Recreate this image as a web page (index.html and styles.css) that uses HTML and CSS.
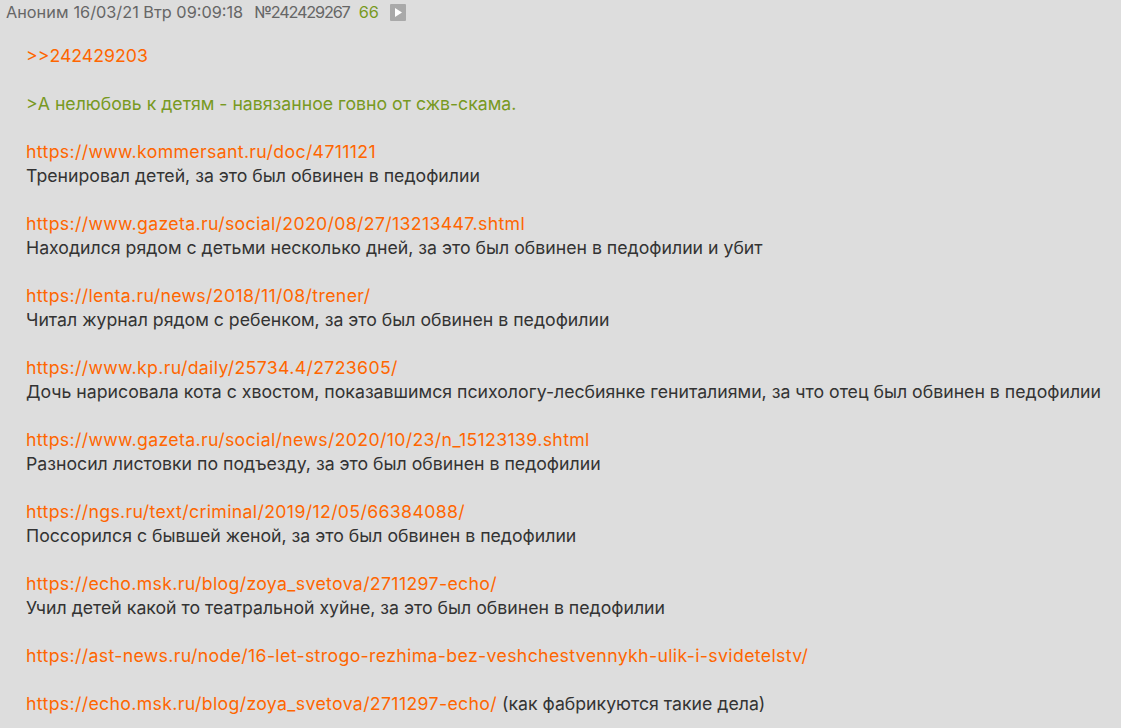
FILE: index.html
```html
<!DOCTYPE html>
<html lang="ru">
<head>
<meta charset="utf-8">
<link rel="stylesheet" href="styles.css">
</head>
<body>
<div class="post">
  <div class="post-details">
    <span class="post-name">Аноним</span>
    <span class="post-time">16/03/21 Втр 09:09:18</span>
    <span class="post-num">№242429267</span>
    <span class="post-count">66</span>
    <span class="post-play"><svg width="16" height="17" viewBox="0 0 16 17"><rect width="16" height="17" rx="1" fill="#a9a9a9"/><path d="M5 4 L12 8.5 L5 13 Z" fill="#ffffff"/></svg></span>
  </div>
  <article class="post-message">
    <a class="reply" href="#">&gt;&gt;242429203</a><br>
    <br>
    <span class="quote">&gt;А нелюбовь к детям - навязанное говно от сжв-скама.</span><br>
    <br>
    <a href="#">https://www.kommersant.ru/doc/4711121</a><br>
    Тренировал детей, за это был обвинен в педофилии<br>
    <br>
    <a href="#">https://www.gazeta.ru/social/2020/08/27/13213447.shtml</a><br>
    Находился рядом с детьми несколько дней, за это был обвинен в педофилии и убит<br>
    <br>
    <a href="#">https://lenta.ru/news/2018/11/08/trener/</a><br>
    Читал журнал рядом с ребенком, за это был обвинен в педофилии<br>
    <br>
    <a href="#">https://www.kp.ru/daily/25734.4/2723605/</a><br>
    Дочь нарисовала кота с хвостом, показавшимся психологу-лесбиянке гениталиями, за что отец был обвинен в педофилии<br>
    <br>
    <a href="#">https://www.gazeta.ru/social/news/2020/10/23/n_15123139.shtml</a><br>
    Разносил листовки по подъезду, за это был обвинен в педофилии<br>
    <br>
    <a href="#">https://ngs.ru/text/criminal/2019/12/05/66384088/</a><br>
    Поссорился с бывшей женой, за это был обвинен в педофилии<br>
    <br>
    <a href="#">https://echo.msk.ru/blog/zoya_svetova/2711297-echo/</a><br>
    Учил детей какой то театральной хуйне, за это был обвинен в педофилии<br>
    <br>
    <a href="#">https://ast-news.ru/node/16-let-strogo-rezhima-bez-veshchestvennykh-ulik-i-svidetelstv/</a><br>
    <br>
    <a href="#">https://echo.msk.ru/blog/zoya_svetova/2711297-echo/</a> (как фабрикуются такие дела)
  </article>
</div>
</body>
</html>
```
FILE: styles.css
```css
html, body {
  margin: 0;
  padding: 0;
  background: #dddddd;
}
body {
  font-family: "Inter", "DejaVu Sans", sans-serif;
  color: #333333;
  overflow: hidden;
}
.post-details {
  display: flex;
  align-items: center;
  height: 24px;
  padding: 0 6px;
  font-size: 16.3px;
  color: #666666;
  white-space: nowrap;
}
.post-time { margin-left: 5px; }
.post-num { margin-left: 11px; letter-spacing: -1.2px; }
.post-count { margin-left: 9px; color: #789922; }
.post-play { margin-left: 11px; display: flex; }
.post-message {
  display: block;
  margin-top: 20px;
  padding-left: 26px;
  font-size: 17.7px;
  line-height: 24px;
  white-space: nowrap;
}
.post-message a {
  color: #ff6600;
  text-decoration: none;
  letter-spacing: 0.35px;
}
.post-message a.reply {
  letter-spacing: 0;
}
.quote {
  color: #789922;
}
```
